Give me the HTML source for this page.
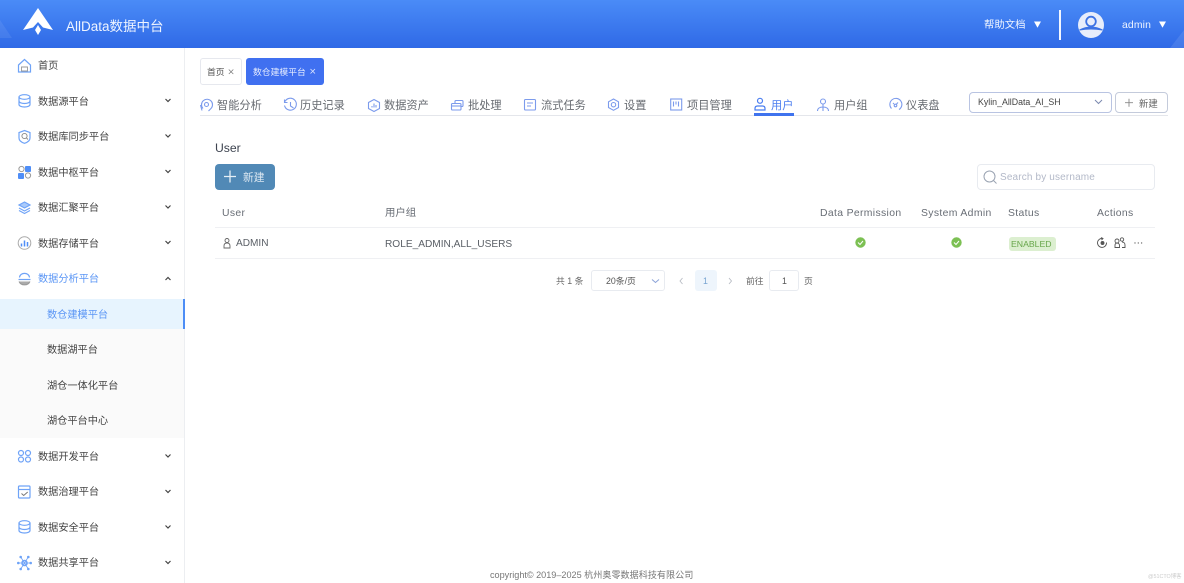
<!DOCTYPE html>
<html lang="zh"><head><meta charset="utf-8"><title>AllData</title>
<style>
*{box-sizing:border-box}
html,body{margin:0;padding:0;background:#fff}
body{width:1184px;height:583px;position:relative;overflow:hidden;font-family:"Liberation Sans","Noto Sans CJK SC",sans-serif;color:#555}
#w{position:absolute;left:0;top:0;width:1184px;height:583px;filter:blur(.35px);overflow:hidden}
.a{position:absolute;white-space:nowrap}
#hd{left:0;top:0;width:1184px;height:48px;background:linear-gradient(180deg,#4a8bf7 0%,#2f69e6 100%);overflow:hidden}
#sb{left:0;top:48px;width:185px;height:535px;background:#fff;border-right:1px solid #eceef1}
.m{left:38px;font-size:10.2px;line-height:14px;color:#444}
.s{left:47px;font-size:10.2px;line-height:14px;color:#444}
.t{font-size:11.2px;line-height:14px;color:#666a70;top:99px}
.th{font-size:10.4px;line-height:14px;color:#686d75;top:207px;letter-spacing:.35px}
svg{position:absolute;overflow:visible}
.ic{fill:none;stroke:#6fa3f7;stroke-width:1.2}
.ti{fill:none;stroke:#7c9bec;stroke-width:1.1}
.ch{fill:none;stroke:#444;stroke-width:1.2}
</style></head><body><div id="w">

<div class="a" id="hd">
<svg style="left:0;top:0" width="1184" height="48">
<polygon points="0,20 12,38 0,38" fill="#fff" opacity=".08"/>
<polygon points="1184,30 1170,48 1184,48" fill="#fff" opacity=".1"/>
<polygon points="38,8 53,30 43,27.500 38,22 33,27.500 23,30" fill="#fff"/>
<polygon points="38,25 41,30 38,35 35,30" fill="#fff"/>
<rect x="1059" y="10" width="2" height="30" fill="#f2f6ff"/>
<circle cx="1091" cy="25" r="13" fill="#e7edfb"/>
<circle cx="1091" cy="21.500" r="4.800" fill="#e7edfb" stroke="#3c72e4" stroke-width="1.800"/>
<path d="M1079.500 30 Q1091 24 1102.500 30 Q1091 28 1079.500 30Z" fill="#3c72e4" stroke="#3c72e4" stroke-width="1"/>
<polygon points="1034,21.500 1041,21.500 1037.500,27.700" fill="#fff"/>
<polygon points="1159,21.500 1166,21.500 1162.500,27.700" fill="#fff"/>
</svg>
<div class="a" style="left:66px;top:18px;font-size:13.500px;line-height:18px;color:#eef4ff">AllData数据中台</div>
<div class="a" style="left:984px;top:19px;font-size:10.400px;line-height:14px;color:#eef4ff">帮助文档</div>
<div class="a" style="left:1122px;top:19px;font-size:10.400px;line-height:14px;color:#eef4ff;letter-spacing:.15px">admin</div>
</div>

<div class="a" id="sb"></div>
<div class="a" style="left:0;top:299px;width:184px;height:139px;background:#fafafa"></div>
<div class="a" style="left:0;top:299px;width:185px;height:30px;background:#e7f4fe"></div>
<div class="a" style="left:183px;top:299px;width:2px;height:30px;background:#4c8df6"></div>

<div class="a m" style="top:60px">首页</div>
<div class="a m" style="top:96px">数据源平台</div>
<div class="a m" style="top:131px">数据库同步平台</div>
<div class="a m" style="top:167px">数据中枢平台</div>
<div class="a m" style="top:202px">数据汇聚平台</div>
<div class="a m" style="top:238px">数据存储平台</div>
<div class="a m" style="top:273px;color:#5b96f5">数据分析平台</div>
<div class="a s" style="top:309px;color:#5b96f5">数仓建模平台</div>
<div class="a s" style="top:344px">数据湖平台</div>
<div class="a s" style="top:380px">湖仓一体化平台</div>
<div class="a s" style="top:415px">湖仓平台中心</div>
<div class="a m" style="top:451px">数据开发平台</div>
<div class="a m" style="top:486px">数据治理平台</div>
<div class="a m" style="top:522px">数据安全平台</div>
<div class="a m" style="top:557px">数据共享平台</div>

<svg style="left:0;top:0" width="185" height="583">
<path class="ic" d="M18.500 65L24.500 59.500L30.500 65V72H18.500Z"/><path d="M21.500 67h6v4h-6z" fill="none" stroke="#999" stroke-width=".9"/>
<g class="ic"><ellipse cx="24.500" cy="97" rx="5.500" ry="2.300"/><path d="M19 97v7.500c0 1.500 2.500 2.500 5.500 2.500s5.500-1 5.500-2.500v-7.500M19 101c0 1.500 2.500 2.500 5.500 2.500s5.500-1 5.500-2.500"/></g>
<path class="ic" d="M24.500 130.500L30 132.500V138C30 141 27 142.500 24.500 143.300C22 142.500 19 141 19 138V132.500Z"/><circle cx="24.500" cy="136" r="2.600" fill="none" stroke="#888" stroke-width=".9"/><path d="M26.500 138l1.500 1.500" stroke="#888" stroke-width=".9"/>
<circle cx="21.500" cy="169" r="2.600" fill="none" stroke="#999"/><rect x="25" y="166" width="6" height="6" rx="1" fill="#4f8ef7"/><rect x="18" y="173" width="6" height="6" rx="1" fill="#4f8ef7"/><circle cx="28" cy="175.500" r="2.600" fill="none" stroke="#999"/>
<g class="ic" stroke-width="1.300"><path d="M24.500 202l5.500 3-5.500 3-5.500-3z" fill="#a9cafb"/><path d="M19 208l5.500 3 5.500-3M19 210.500l5.500 3 5.500-3"/></g>
<circle cx="24.500" cy="243" r="6.300" fill="none" stroke="#aaa"/><path d="M21.500 243.500v3M24.500 240.500v6M27.500 242v4.500" stroke="#4f8ef7" stroke-width="1.500"/>
<path class="ic" d="M19.500 277.500C20 272 29 272 29.500 277.500"/><path class="ic" d="M18.500 279.500h12"/><path d="M19 281.500C21 286 28 286 30 281.500" fill="#aaa" stroke="#999"/>
<g class="ic" stroke-width="1.300"><circle cx="21" cy="453" r="2.500"/><circle cx="28" cy="453" r="2.500"/><circle cx="21" cy="459.500" r="2.500"/><circle cx="28" cy="459.500" r="2.500"/></g>
<rect x="18.500" y="486" width="11.500" height="12" class="ic" rx="1"/><path class="ic" d="M18.500 489.500h11.500"/><path d="M21.500 493.500l2.200 2 4-3.500" fill="none" stroke="#777"/>
<g class="ic"><ellipse cx="24.500" cy="523" rx="5.500" ry="2.300"/><path d="M19 523v7.500c0 1.500 2.500 2.500 5.500 2.500s5.500-1 5.500-2.500v-7.500M19 527c0 1.500 2.500 2.500 5.500 2.500s5.500-1 5.500-2.500"/></g>
<g class="ic"><circle cx="24.500" cy="563" r="2.500" stroke-width="1.600"/><path d="M20.700 557L24.500 563L28.300 557M18.300 563H30.700M20.700 569L24.500 563L28.300 569" stroke-width=".8"/></g>
<g fill="#6ea3f7"><circle cx="20.700" cy="557" r="1.300"/><circle cx="28.300" cy="557" r="1.300"/><circle cx="18.300" cy="563" r="1.300"/><circle cx="30.700" cy="563" r="1.300"/><circle cx="20.700" cy="569" r="1.300"/><circle cx="28.300" cy="569" r="1.300"/></g>
<g class="ch">
<path d="M165.500 99l2.500 2.500 2.500-2.500"/><path d="M165.500 134.500l2.500 2.500 2.500-2.500"/><path d="M165.500 170l2.500 2.500 2.500-2.500"/><path d="M165.500 205.500l2.500 2.500 2.500-2.500"/><path d="M165.500 241l2.500 2.500 2.500-2.500"/><path d="M165.500 280l2.500-2.500 2.500 2.500"/><path d="M165.500 454.500l2.500 2.500 2.500-2.500"/><path d="M165.500 490l2.500 2.500 2.500-2.500"/><path d="M165.500 525.500l2.500 2.500 2.500-2.500"/><path d="M165.500 561l2.500 2.500 2.500-2.500"/>
</g>
</svg>

<div class="a" style="left:200px;top:58px;width:42px;height:27px;border:1px solid #e6e8ee;border-radius:3px;background:#fff"></div>
<div class="a" style="left:207px;top:66px;font-size:8.800px;line-height:13px;color:#555">首页</div>
<div class="a" style="left:246px;top:58px;width:78px;height:27px;border-radius:3px;background:#4070f0"></div>
<div class="a" style="left:253px;top:66px;font-size:8.800px;line-height:13px;color:#e8eeff">数仓建模平台</div>

<div class="a t" style="left:217px">智能分析</div>
<div class="a t" style="left:300px">历史记录</div>
<div class="a t" style="left:384px">数据资产</div>
<div class="a t" style="left:468px">批处理</div>
<div class="a t" style="left:541px">流式任务</div>
<div class="a t" style="left:624px">设置</div>
<div class="a t" style="left:687px">项目管理</div>
<div class="a t" style="left:771px;color:#4a7df0">用户</div>
<div class="a t" style="left:834px">用户组</div>
<div class="a t" style="left:906px">仪表盘</div>
<div class="a" style="left:200px;top:115px;width:968px;height:1px;background:#e4e6eb"></div>
<div class="a" style="left:754px;top:113px;width:40px;height:2.500px;background:#3f73ee"></div>

<div class="a" style="left:969px;top:92px;width:143px;height:21px;border:1px solid #b9c4e2;border-radius:4px;background:#fff"></div>
<div class="a" style="left:978px;top:96px;font-size:8.800px;line-height:12px;color:#444">Kylin_AllData_AI_SH</div>
<div class="a" style="left:1115px;top:92px;width:53px;height:21px;border:1px solid #c4cbdb;border-radius:4px;background:#fff"></div>
<div class="a" style="left:1139px;top:97px;font-size:9.400px;line-height:13px;color:#666">新建</div>

<div class="a" style="left:215px;top:141px;font-size:12.200px;line-height:15px;color:#3e4450">User</div>
<div class="a" style="left:215px;top:164px;width:60px;height:26px;border-radius:4px;background:#5189b6"></div>
<div class="a" style="left:243px;top:171px;font-size:10.800px;line-height:14px;color:#dbe7f1">新建</div>

<div class="a" style="left:977px;top:164px;width:178px;height:26px;border:1px solid #e8ebf0;border-radius:4px;background:#fff"></div>
<div class="a" style="left:1000px;top:171px;font-size:10px;line-height:13px;color:#b3b9c8;letter-spacing:.15px">Search by username</div>

<div class="a th" style="left:222px">User</div>
<div class="a th" style="left:385px;letter-spacing:0">用户组</div>
<div class="a th" style="left:820px">Data Permission</div>
<div class="a th" style="left:921px">System Admin</div>
<div class="a th" style="left:1008px">Status</div>
<div class="a th" style="left:1097px">Actions</div>
<div class="a" style="left:215px;top:227px;width:940px;height:1px;background:#eff0f3"></div>
<div class="a" style="left:215px;top:258px;width:940px;height:1px;background:#eff0f3"></div>

<div class="a" style="left:236px;top:237px;font-size:10.100px;line-height:14px;color:#5a5f66">ADMIN</div>
<div class="a" style="left:385px;top:238px;font-size:10.150px;line-height:14px;color:#5a5f66">ROLE_ADMIN,ALL_USERS</div>
<div class="a" style="left:1009px;top:237px;width:47px;height:14px;border-radius:3px;background:#dcefd0"></div>
<div class="a" style="left:1011px;top:238px;font-size:8.700px;line-height:12px;color:#67a64a">ENABLED</div>

<div class="a" style="left:556px;top:275px;font-size:8.800px;line-height:12px;color:#666">共 1 条</div>
<div class="a" style="left:591px;top:270px;width:74px;height:21px;border:1px solid #e8ebf0;border-radius:3px;background:#fff"></div>
<div class="a" style="left:606px;top:275px;font-size:8.800px;line-height:12px;color:#555">20条/页</div>
<div class="a" style="left:695px;top:270px;width:22px;height:21px;border-radius:3px;background:#eef5fc"></div>
<div class="a" style="left:703px;top:275px;font-size:8.800px;line-height:12px;color:#7aa5d2">1</div>
<div class="a" style="left:746px;top:275px;font-size:8.800px;line-height:12px;color:#666">前往</div>
<div class="a" style="left:769px;top:270px;width:30px;height:21px;border:1px solid #e8ebf0;border-radius:3px;background:#fff"></div>
<div class="a" style="left:782px;top:275px;font-size:8.800px;line-height:12px;color:#555">1</div>
<div class="a" style="left:804px;top:275px;font-size:8.800px;line-height:12px;color:#666">页</div>

<svg style="left:0;top:0" width="1184" height="300">
<path d="M228.800 69.500l4.500 4.500M233.300 69.500l-4.500 4.500" stroke="#777" stroke-width=".7" fill="none"/>
<path d="M310.500 69l4.500 4.500M315 69l-4.500 4.500" stroke="#dfe7ff" stroke-width=".8"/>
<g class="ti">
<path d="M203 108.500A5.500 5.500 0 1 1 210.500 109L208.500 111"/><circle cx="206.500" cy="104.500" r="2"/><path d="M200.500 105L202 110.500"/>
<path d="M285 101.500a6 6 0 1 1-.5 4"/><path d="M284.500 99.500v3h3"/><path d="M290.500 102v4l3 2"/>
<path d="M374 99.500l5.500 3v6l-5.500 3-5.500-3v-6z"/><path d="M372 107.500v-1.500M374 107.500v-4M376 107.500v-2.500"/>
<rect x="455" y="100.500" width="8" height="6" rx="1"/><rect x="451.500" y="103.500" width="9.500" height="6.500" rx="1" fill="#fff"/><path d="M451.500 106h9.500"/>
<rect x="524.500" y="99.500" width="11" height="10.500" rx="1"/><path d="M527 103h6M527 106h4"/>
<path d="M613.500 99l5 2.800v5.700l-5 2.800-5-2.800v-5.700z"/><circle cx="613.500" cy="104.700" r="2.200"/>
<rect x="670.700" y="99" width="11" height="11"/><path d="M673.500 101.500v5M676 101.500v3M678.500 101.500v5"/>
</g>
<g fill="none" stroke="#4a7df0" stroke-width="1.200"><circle cx="760" cy="100.800" r="2.500"/><path d="M755 110v-1.500c0-1.500 1-2.500 2.500-2.500h5c1.500 0 2.500 1 2.500 2.500v1.500z"/></g>
<g class="ti"><circle cx="823" cy="101.500" r="2.500"/><path d="M823 104v3M817.500 111c0-2.500 2.200-4 5.500-4s5.500 1.500 5.500 4M823 107v4"/>
<path d="M891.500 108.500a6 6 0 1 1 7.500 1M893 103l1 1M898 102.500l-1.500 1.500"/><circle cx="895.500" cy="105.500" r="1.300"/></g>
<path d="M1095 100l3.500 3.500 3.500-3.500" fill="none" stroke="#7c8ab0" stroke-width="1"/>
<path d="M1125 102.700h8M1129 98.700v8" stroke="#888" stroke-width=".9"/>
<path d="M224 176.500h12M230 170.500v12" stroke="#e6eff6" stroke-width="1.300"/>
<circle cx="989.500" cy="176.500" r="5.500" fill="none" stroke="#9aa3b2"/><path d="M993.500 180.500l3 3" stroke="#9aa3b2"/>
<circle cx="227" cy="240.500" r="2" fill="none" stroke="#666" stroke-width=".9"/><path d="M224 248v-2c0-2 1-3 3-3s3 1 3 3v2z" fill="none" stroke="#666" stroke-width=".9"/>
<circle cx="860.500" cy="242.500" r="5.200" fill="#7cc053"/><path d="M858 242.500l2 2 3-3.500" fill="none" stroke="#fff"/>
<circle cx="956.500" cy="242.500" r="5.200" fill="#7cc053"/><path d="M954 242.500l2 2 3-3.500" fill="none" stroke="#fff"/>
<g fill="none" stroke="#555" stroke-width=".9"><path d="M1103 238.500a4.500 4.500 0 1 0 3.500 4"/><circle cx="1102.500" cy="243" r="1.500" fill="#555"/><path d="M1101 237.500l2 1-1.500 1.500"/>
<circle cx="1117" cy="241" r="2"/><circle cx="1122" cy="239.500" r="1.700"/><path d="M1115 247.500v-2.500c0-1 1-2 2-2s2.500 1 2.500 2v2.500zM1122 242c1.500 0 3 1 3 3v2.500h-3"/></g>
<g fill="#777"><circle cx="1135" cy="243" r=".7"/><circle cx="1138.300" cy="243" r=".7"/><circle cx="1141.600" cy="243" r=".7"/></g>
<path d="M682.500 278l-2.500 3 2.500 3M729 278l2.500 3-2.500 3" fill="none" stroke="#b8bcc4" stroke-width=".9"/>
<path d="M652 279.500l3.500 3 3.500-3" fill="none" stroke="#8aa2d8"/>
</svg>

<div class="a" style="left:490px;top:569px;font-size:9.100px;line-height:13px;color:#777">copyright© 2019–2025 杭州奥零数据科技有限公司</div>
<div class="a" style="left:1148px;top:573px;font-size:5.400px;line-height:8px;color:#ccc">@51CTO博客</div>
</div></body></html>
